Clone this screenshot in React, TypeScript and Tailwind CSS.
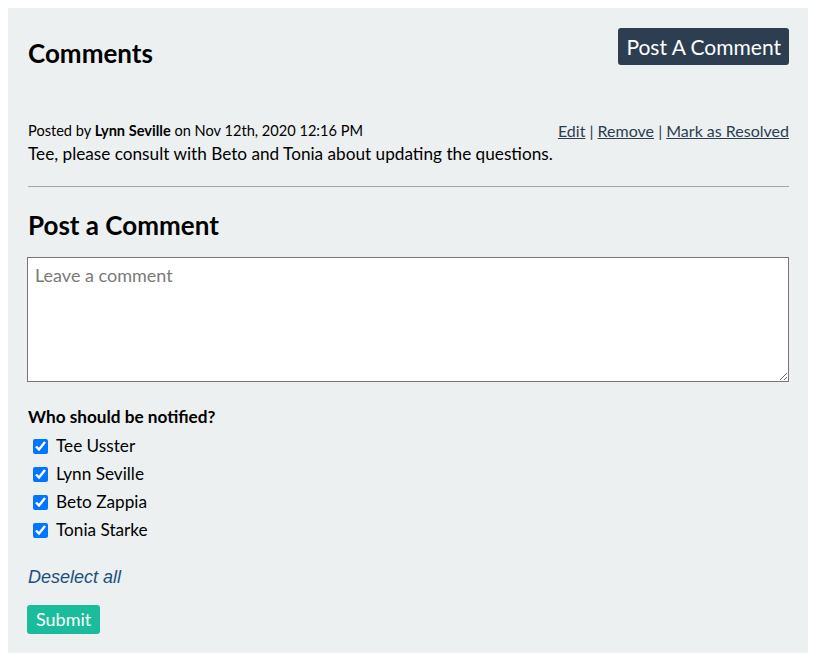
import React, { useState } from 'react';

const people = ['Tee Usster', 'Lynn Seville', 'Beto Zappia', 'Tonia Starke'];

const App = () => {
    const [checked, setChecked] = useState<boolean[]>(people.map(() => true));

    return (
        <div className="p-2 bg-white font-['Lato','Noto_Sans',sans-serif] text-black">
            <div className="bg-[#ecf0f1] pl-5 pr-[19px] pt-5 pb-[19px]">
                <div className="flex items-start justify-between">
                    <h1 className="mt-[10px] text-[26px] leading-[31px] font-bold">Comments</h1>
                    <button className="h-[37px] px-[8px] bg-[#2c3e50] text-white text-[21px] rounded-[3px]">
                        Post A Comment
                    </button>
                </div>

                <div className="mt-[52px]">
                    <div className="flex items-end justify-between">
                        <p className="text-[14.6px] leading-[18px]">
                            Posted by <span className="font-bold">Lynn Seville</span> on Nov 12th, 2020 12:16 PM
                        </p>
                        <div className="text-[16px] leading-[19px] text-[#2c3e50]">
                            <a href="#" className="underline">Edit</a>
                            <span> | </span>
                            <a href="#" className="underline">Remove</a>
                            <span> | </span>
                            <a href="#" className="underline">Mark as Resolved</a>
                        </div>
                    </div>
                    <p className="mt-[3px] text-[17.2px] leading-[21px]">Tee, please consult with Beto and Tonia about updating the questions.</p>
                </div>

                <hr className="mt-[22px] border-0 border-t border-[#a6a6a6]" />

                <h2 className="mt-[23px] text-[26px] leading-[31px] font-bold">Post a Comment</h2>

                <textarea
                    className="mt-[16px] -ml-px block w-[calc(100%+1px)] h-[125px] bg-white border border-[#767676] px-[7px] py-[6px] text-[18px] leading-[22px] placeholder:text-[#7a7a7a] outline-none"
                    placeholder="Leave a comment"
                />

                <p className="mt-[24px] text-[17.2px] leading-[21px] font-bold">Who should be notified?</p>
                <div className="mt-[5px] flex flex-col">
                    {people.map((name, i) => (
                        <label key={name} className="flex items-center h-[28px] text-[17.2px] pl-[5px]">
                            <input
                                type="checkbox"
                                className="w-[15px] h-[15px] mr-[8px] accent-[#0075ff]"
                                checked={checked[i]}
                                onChange={() => setChecked(checked.map((c, j) => (j === i ? !c : c)))}
                            />
                            {name}
                        </label>
                    ))}
                </div>

                <a href="#" className="block mt-[22px] text-[18px] leading-[22px] italic text-[#1b4f80] font-['Liberation_Sans',Arial,sans-serif]">
                    Deselect all
                </a>

                <button className="mt-[17px] -ml-px h-[29px] px-[9px] bg-[#1abc9c] text-white text-[18px] rounded-[3px]">
                    Submit
                </button>
            </div>
        </div>
    );
};

export default App;
